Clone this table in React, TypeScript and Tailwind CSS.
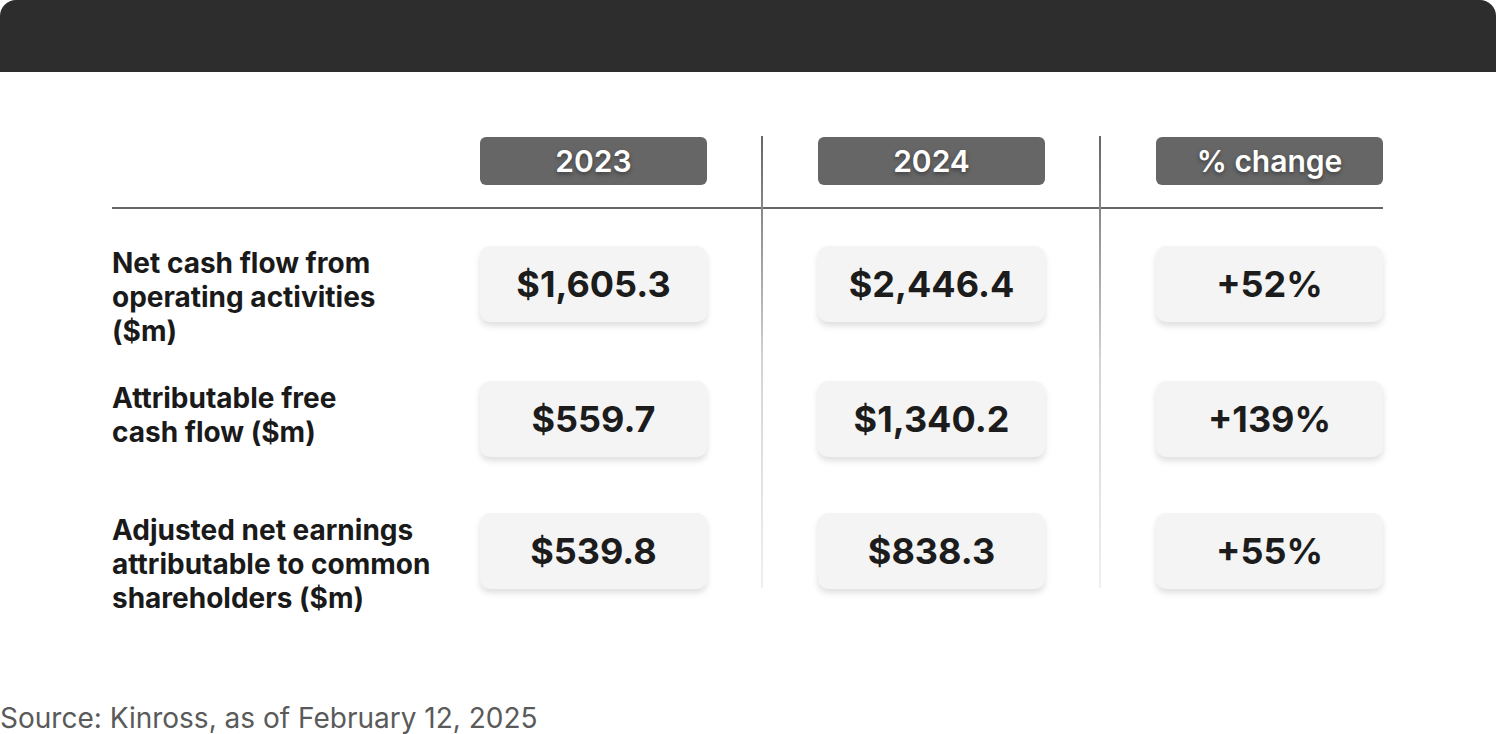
const ROWS = [
  { label: 'Net cash flow from operating activities ($m)', values: ['$1,605.3', '$2,446.4', '+52%'], row: 'row-start-4', w: 'max-w-[300px]' },
  { label: 'Attributable free cash flow ($m)', values: ['$559.7', '$1,340.2', '+139%'], row: 'row-start-5', w: 'max-w-[250px]' },
  { label: 'Adjusted net earnings attributable to common shareholders ($m)', values: ['$539.8', '$838.3', '+55%'], row: 'row-start-6', w: 'max-w-[340px]' },
]

const COLS = ['col-start-2', 'col-start-6', 'col-start-10']
const HEADERS = ['2023', '2024', '% change']

function Divider({ col }: { col: string }) {
  return (
    <div className={`${col} row-start-1 row-span-6 self-start h-[452px] w-[2px] bg-gradient-to-b from-[#666666] via-[#d4d4d4] to-[#efefef]`} />
  )
}

export default function App() {
  return (
    <div className="w-[1496px] h-[734px] bg-white flex flex-col font-['Inter',sans-serif] overflow-hidden">
      <div className="h-[72px] bg-[#2d2d2d] rounded-t-[16px]" />

      <div className="pl-[112px] pt-[64px]">
        <div className="grid grid-cols-[368px_227px_54px_2px_55px_227px_54px_2px_55px_227px] grid-rows-[71px_2px_37px_135px_132px_auto]">
          {HEADERS.map((h, i) => (
            <div
              key={h}
              className={`${COLS[i]} row-start-1 self-start mt-px h-[48px] rounded-[6px] bg-[#666666] flex items-center justify-center text-white text-[30px] leading-none font-semibold [text-shadow:0_2px_4px_rgba(0,0,0,0.4)]`}
            >
              {h}
            </div>
          ))}

          <div className="col-span-full row-start-2 h-[2px] bg-[#666666]" />

          <Divider col="col-start-4" />
          <Divider col="col-start-8" />

          {ROWS.map((r) => (
            <div key={r.label} className="contents">
              <div className={`col-start-1 ${r.row} ${r.w} text-[28px] leading-[34px] font-bold text-[#1a1a1a]`}>
                {r.label}
              </div>
              {r.values.map((v, i) => (
                <div
                  key={v}
                  className={`${COLS[i]} ${r.row} self-start h-[76px] rounded-[10px] bg-[#f4f4f4] shadow-[0_4px_6px_rgba(0,0,0,0.13)] flex items-center justify-center text-[36px] font-bold text-[#1c1c1c]`}
                >
                  {v}
                </div>
              ))}
            </div>
          ))}
        </div>
      </div>

      <p className="mt-auto text-[28px] leading-[32px] text-[#5a5a5a]">
        Source: Kinross, as of February 12, 2025
      </p>
    </div>
  )
}
